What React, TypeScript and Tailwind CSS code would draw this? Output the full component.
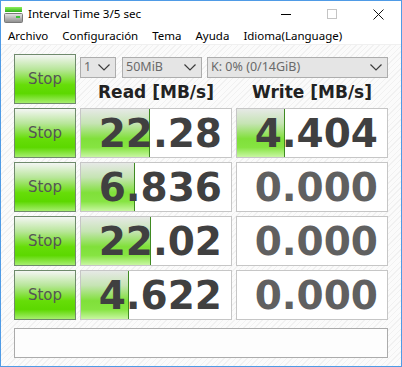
const rows = [
  { read: "22.28", readBar: 69, write: "4.404", writeBar: 48 },
  { read: "6.836", readBar: 54, write: "0.000", writeBar: 0 },
  { read: "22.02", readBar: 70, write: "0.000", writeBar: 0 },
  { read: "4.622", readBar: 48, write: "0.000", writeBar: 0 },
];

const menu = ["Archivo", "Configuración", "Tema", "Ayuda", "Idioma(Language)"];

function AppIcon() {
  return (
    <svg width="20" height="18" viewBox="0 0 20 18">
      <defs>
        <linearGradient id="gbar" x1="0" y1="0" x2="0" y2="1">
          <stop offset="0" stopColor="#8ef05a" />
          <stop offset="1" stopColor="#2fae1c" />
        </linearGradient>
        <linearGradient id="drv" x1="0" y1="0" x2="0" y2="1">
          <stop offset="0" stopColor="#e6e6e6" />
          <stop offset="1" stopColor="#8c8c8c" />
        </linearGradient>
      </defs>
      <rect x="1" y="1" width="17" height="5" fill="url(#gbar)" />
      <rect x="0.5" y="7.5" width="18" height="9" rx="1" fill="url(#drv)" stroke="#7a7a7a" />
      <rect x="12" y="10" width="4" height="2" fill="#3ec23a" />
    </svg>
  );
}

function Chevron() {
  return (
    <svg width="12" height="7" viewBox="0 0 12 7" className="mr-[2px]">
      <path d="M0.5 0.5 L6 6 L11.5 0.5" fill="none" stroke="#3c3c3c" strokeWidth="1.2" />
    </svg>
  );
}

function Stop() {
  return (
    <button className="flex h-full w-[62px] items-center justify-center border border-[#6f8a6c] bg-[linear-gradient(to_bottom,#f4f6f4_0%,#b8e69a_30%,#66dd08_62%,#5cd800_80%,#a6ee6e_100%)] font-['DejaVu_Sans',sans-serif] text-[15px] text-[#555]">
      Stop
    </button>
  );
}

function Combo({ w, label }: { w: string; label: string }) {
  return (
    <div
      className={`${w} flex h-[21px] items-center justify-between border border-[#adadad] bg-[#e5e5e5] pl-[3px] pr-[3px] font-['Noto_Sans',sans-serif] text-[12.5px] text-[#6a6a6a]`}
    >
      <span>{label}</span>
      <Chevron />
    </div>
  );
}

function Value({ value, bar }: { value: string; bar: number }) {
  const zero = value === "0.000";
  return (
    <div className="relative flex h-full w-[152px] items-center justify-end border border-[#c6c6c6] bg-white pr-[9px]">
      {bar > 0 && (
        <div
          className="absolute left-0 top-0 h-full border-r border-[#3f8a22] bg-[linear-gradient(to_bottom,#e6e9e6_0%,#c6e4b4_30%,#80e03a_62%,#86e442_80%,#c8f6a2_100%)]"
          style={{ width: bar }}
        />
      )}
      <span
        className={`relative font-['DejaVu_Sans',sans-serif] text-[39px] font-bold leading-none ${
          zero ? "text-[#606060]" : "text-[#404040]"
        }`}
      >
        {value}
      </span>
    </div>
  );
}

export default function App() {
  return (
    <div className="flex h-[367px] w-[402px] flex-col overflow-hidden border border-[#4f9be6] bg-white font-['Noto_Sans',sans-serif]">
      {/* title bar */}
      <div className="flex h-[26px] shrink-0 items-center bg-white">
        <div className="ml-[3px] mt-[2px]">
          <AppIcon />
        </div>
        <span className="ml-[4px] text-[11.6px] text-black">Interval Time 3/5 sec</span>
        <div className="ml-auto flex h-full">
          <div className="flex w-[46px] items-center justify-center">
            <div className="h-px w-[10px] bg-black" />
          </div>
          <div className="flex w-[46px] items-center justify-center">
            <div className="h-[10px] w-[10px] border border-[#c4c4c4]" />
          </div>
          <div className="flex w-[46px] items-center justify-center">
            <svg width="11" height="11" viewBox="0 0 11 11">
              <path d="M0.5 0.5 L10.5 10.5 M10.5 0.5 L0.5 10.5" stroke="#111" strokeWidth="1" />
            </svg>
          </div>
        </div>
      </div>

      {/* menu */}
      <div className="flex h-[18px] shrink-0 items-center gap-[14px] border-b border-[#f0f0f0] bg-white pl-[7px] text-[11.5px] text-black">
        {menu.map((m) => (
          <span key={m}>{m}</span>
        ))}
      </div>

      {/* body */}
      <div className="flex flex-1 flex-col bg-[repeating-linear-gradient(135deg,#fbfbfb_0px,#fbfbfb_3px,#f1f1f1_3px,#f1f1f1_4px)] px-[13px] pt-[9px]">
        <div className="flex h-[50px] gap-[4px]">
          <Stop />
          <div className="flex w-[308px] flex-col">
            <div className="mt-[3px] flex">
              <Combo w="w-[36px]" label="1" />
              <div className="ml-[6px]">
                <Combo w="w-[80px]" label="50MiB" />
              </div>
              <div className="ml-[5px]">
                <Combo w="w-[181px]" label="K: 0% (0/14GiB)" />
              </div>
            </div>
            <div className="mt-[3px] flex font-['DejaVu_Sans',sans-serif] text-[17px] font-bold leading-[22px] text-[#222]">
              <div className="w-[152px] text-center">Read [MB/s]</div>
              <div className="ml-[4px] w-[152px] text-center">Write [MB/s]</div>
            </div>
          </div>
        </div>

        <div className="mt-[4px] flex flex-col gap-[4px]">
          {rows.map((r, i) => (
            <div key={i} className="flex h-[50px] gap-[4px]">
              <Stop />
              <Value value={r.read} bar={r.readBar} />
              <Value value={r.write} bar={r.writeBar} />
            </div>
          ))}
        </div>

        <div className="mt-[8px] h-[30px] w-[374px] border border-[#ababab] bg-[#fdfdfd]" />
      </div>
    </div>
  );
}
